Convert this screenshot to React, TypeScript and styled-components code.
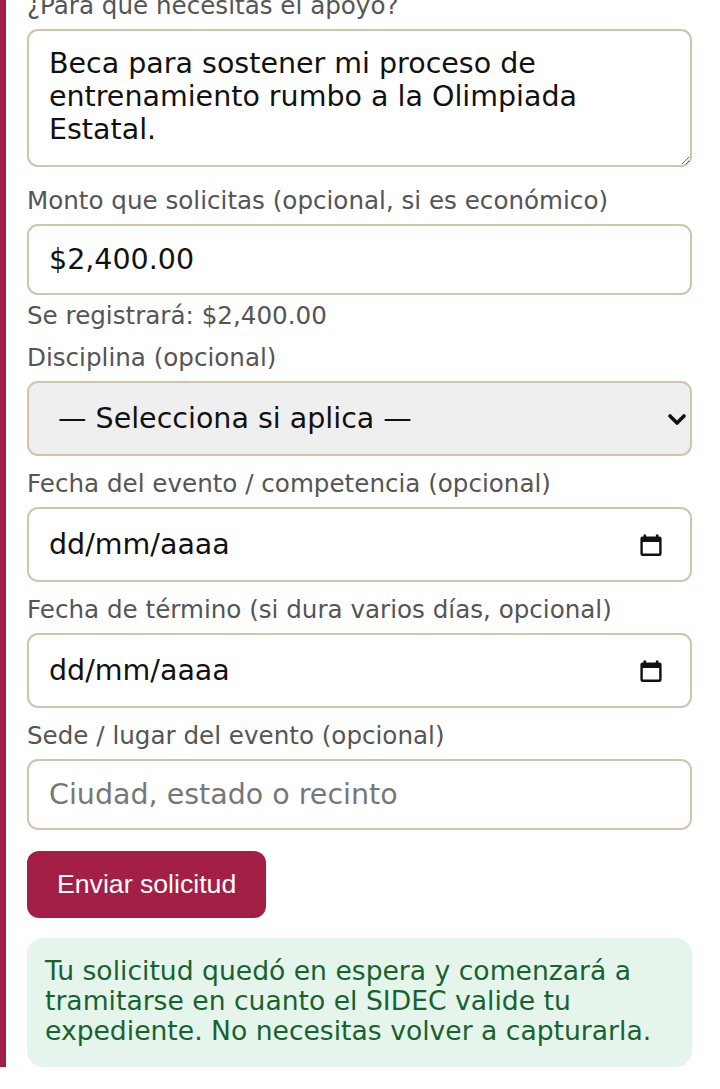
import React from "react";
import styled, { createGlobalStyle } from "styled-components";

const Global = createGlobalStyle`
  html, body { margin: 0; padding: 0; background: #ffffff; }
  body { font-family: "DejaVu Sans", Verdana, sans-serif; }
  * { box-sizing: border-box; }
`;

const Viewport = styled.div`
  margin-top: -8px;
`;

const Card = styled.section`
  border-left: 6px solid #a11f47;
  padding: 0 28px 0 21px;
  display: flex;
  flex-direction: column;
`;

const Form = styled.form`
  display: flex;
  flex-direction: column;
  gap: 14px;
`;

const Field = styled.div<{ $extra?: number }>`
  display: flex;
  flex-direction: column;
  gap: 9px;
  margin-bottom: ${(p) => p.$extra ?? 0}px;
`;

const Label = styled.label`
  font-size: 24.6px;
  line-height: 28px;
  color: #555555;
`;

const Hint = styled.div`
  font-size: 24.6px;
  line-height: 28px;
  color: #555555;
  margin-top: -2px;
`;

const controlBase = `
  width: 100%;
  border: 2px solid #d3c2ae;
  border-radius: 11px;
  font-family: "DejaVu Sans", Verdana, sans-serif;
  font-size: 28.5px;
  color: #111111;
  background: #ffffff;
  outline: none;
`;

const TextArea = styled.textarea`
  ${controlBase}
  display: block;
  height: 138px;
  padding: 16px 20px;
  line-height: normal;
`;

const Input = styled.input`
  ${controlBase}
  display: block;
  height: 71px;
  padding: 0 20px;
  &::placeholder { color: #777777; opacity: 1; }
`;

const SelectWrap = styled.div`
  position: relative;
`;

const Select = styled.select`
  ${controlBase}
  display: block;
  appearance: none;
  -webkit-appearance: none;
  height: 75px;
  padding: 0 50px 0 29px;
  background: #efefef;
`;

const Chevron = styled.svg`
  position: absolute;
  right: 5px;
  top: 50%;
  margin-top: -9px;
  width: 20px;
  height: 20px;
  pointer-events: none;
`;

const DateBox = styled.div<{ $h: number }>`
  ${controlBase}
  height: ${(p) => p.$h}px;
  display: flex;
  align-items: center;
  justify-content: space-between;
  padding: 0 27px 0 20px;
`;

const DateText = styled.span`
  font-size: 28.5px;
  color: #111111;
`;

const CalIcon = styled.svg`
  width: 24px;
  height: 24px;
  flex: none;
`;

const Button = styled.button`
  align-self: flex-start;
  margin-top: 7px;
  height: 67px;
  padding: 0 30px;
  border: none;
  border-radius: 12px;
  background: #a31f46;
  color: #ffffff;
  font-family: "Liberation Sans", Arial, sans-serif;
  font-size: 26.67px;
`;

const Notice = styled.div`
  margin-top: 20px;
  background: #e6f5eb;
  color: #17632e;
  border-radius: 16px;
  padding: 18px 18px 21px 18px;
  font-size: 26.6px;
  line-height: 30px;
`;

const Calendar = () => (
  <CalIcon viewBox="0 0 24 24" aria-hidden>
    <rect x="2.6" y="4.6" width="18.8" height="17.2" rx="1" fill="none" stroke="#111" strokeWidth="2.4" />
    <rect x="2" y="4" width="20" height="5" fill="#111" />
    <rect x="4.5" y="1.5" width="2.6" height="4" fill="#111" />
    <rect x="16.9" y="1.5" width="2.6" height="4" fill="#111" />
  </CalIcon>
);

const DateField = ({ h }: { h: number }) => (
  <DateBox $h={h}>
    <DateText>dd/mm/aaaa</DateText>
    <Calendar />
  </DateBox>
);

export default function App() {
  return (
    <Viewport>
      <Global />
      <Card>
        <Form onSubmit={(e) => e.preventDefault()}>
          <Field $extra={6}>
            <Label>¿Para qué necesitas el apoyo?</Label>
            <TextArea
              defaultValue="Beca para sostener mi proceso de entrenamiento rumbo a la Olimpiada Estatal."
            />
          </Field>
          <Field>
            <Label>Monto que solicitas (opcional, si es económico)</Label>
            <Input defaultValue="$2,400.00" />
            <Hint>Se registrará: $2,400.00</Hint>
          </Field>
          <Field>
            <Label>Disciplina (opcional)</Label>
            <SelectWrap>
              <Select defaultValue="">
                <option value="">— Selecciona si aplica —</option>
              </Select>
              <Chevron viewBox="0 0 20 20" aria-hidden>
                <polyline points="3,6 10,13 17,6" fill="none" stroke="#111" strokeWidth="3.6" strokeLinecap="round" strokeLinejoin="round" />
              </Chevron>
            </SelectWrap>
          </Field>
          <Field>
            <Label>Fecha del evento / competencia (opcional)</Label>
            <DateField h={75} />
          </Field>
          <Field>
            <Label>Fecha de término (si dura varios días, opcional)</Label>
            <DateField h={75} />
          </Field>
          <Field>
            <Label>Sede / lugar del evento (opcional)</Label>
            <Input placeholder="Ciudad, estado o recinto" />
          </Field>
          <Button type="submit">Enviar solicitud</Button>
        </Form>
        <Notice>
          Tu solicitud quedó en espera y comenzará a tramitarse en cuanto el SIDEC valide tu expediente. No necesitas volver a capturarla.
        </Notice>
      </Card>
    </Viewport>
  );
}
